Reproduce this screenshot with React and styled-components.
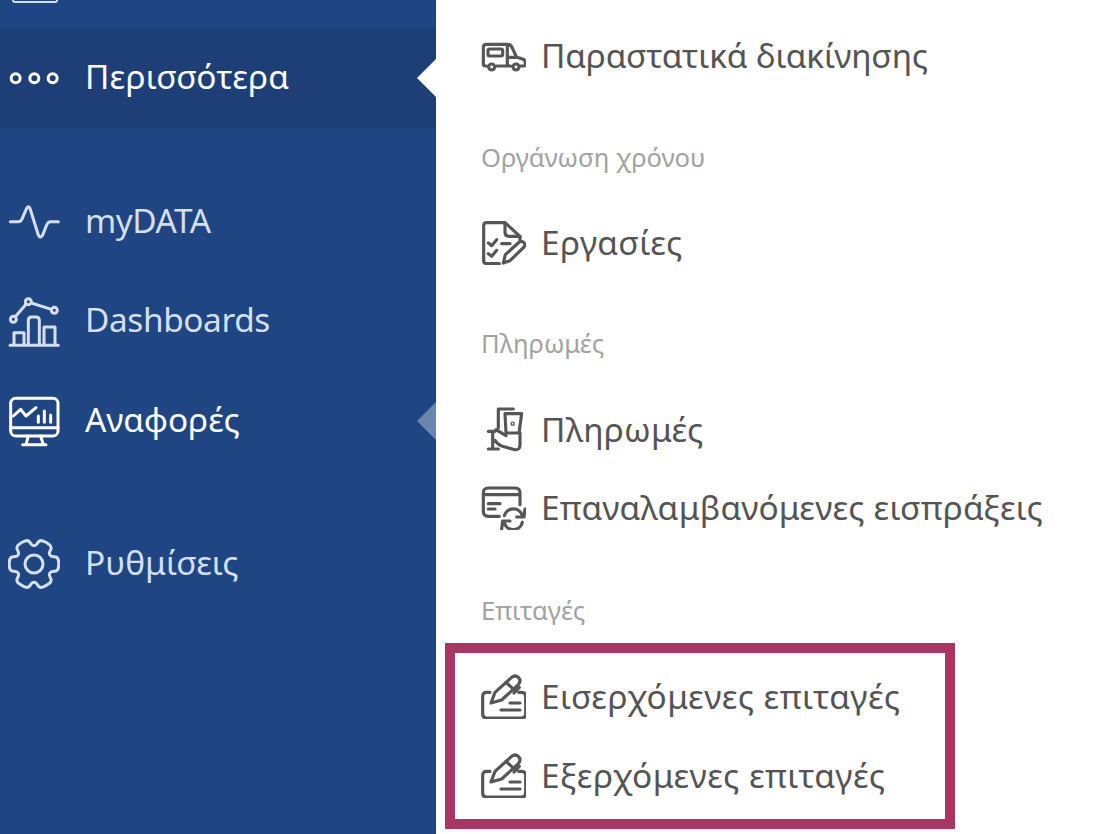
import React from "react";
import styled, { createGlobalStyle } from "styled-components";

const GlobalStyle = createGlobalStyle`
  html, body {
    margin: 0;
    padding: 0;
    height: 834px;
    overflow: hidden;
    background: #fff;
    font-family: "Noto Sans", "Open Sans", sans-serif;
  }
`;

const MENU_ICON_COLOR = "#d5dfec";

// six teeth with flat tops and round notches between them
const gearPath = (cx, cy) => {
  const at = (deg, r) => {
    const rad = (deg * Math.PI) / 180;
    return `${(cx + r * Math.cos(rad)).toFixed(1)} ${(cy + r * Math.sin(rad)).toFixed(1)}`;
  };
  let d = `M${at(-30, 55)}`;
  [0, 60, 120, 180, 240, 300].forEach((a) => {
    d += `Q${at(a - 25, 55)} ${at(a - 22, 60)}`;
    d += `L${at(a - 18, 69)}`;
    d += `Q${at(a - 14, 75)} ${at(a - 8, 74)}`;
    d += `Q${at(a, 75)} ${at(a + 8, 74)}`;
    d += `Q${at(a + 14, 75)} ${at(a + 18, 69)}`;
    d += `L${at(a + 22, 60)}`;
    d += `Q${at(a + 25, 55)} ${at(a + 30, 55)}`;
  });
  return d + "Z";
};

const DotsIcon = () => (
  <MenuSvg viewBox="24 153 156 156" $color="#fff">
    <circle cx="47" cy="232" r="13.5" />
    <circle cx="103" cy="232" r="13.5" />
    <circle cx="158" cy="232" r="13.5" />
  </MenuSvg>
);

const PulseIcon = () => (
  <MenuSvg viewBox="24 588 156 156" $color={MENU_ICON_COLOR}>
    <path d="M31 665H55Q64 665 69 650L80 625Q85 615 90 625L115 705Q121 717 128 705L140 675Q144 665 152 665H175" />
  </MenuSvg>
);

const DashboardIcon = () => (
  <MenuSvg viewBox="24 42 156 156" $color={MENU_ICON_COLOR}>
    <circle cx="40" cy="115" r="9" />
    <circle cx="85" cy="62" r="9" />
    <circle cx="163" cy="88" r="9" />
    <path d="M46 107L78 70M94 66L154 85M30 193H175" />
    <path d="M42 190V155H72V190M85 190V118Q85 108 95 108H108Q118 108 118 118V190M132 190V138H165V190" />
  </MenuSvg>
);

const ReportIcon = () => (
  <MenuSvg viewBox="24 342 156 156" $color="#fff">
    <rect x="32" y="352" width="142" height="113" rx="15" />
    <path d="M32 440H174M85 465L78 491M122 465L130 491M68 491H138" />
    <path d="M40 405L62 385L78 405L108 380M115 424V405M133 424V390M152 424V402" />
  </MenuSvg>
);

const GearIcon = () => (
  <MenuSvg viewBox="25 774 156 156" $color={MENU_ICON_COLOR}>
    <path d={gearPath(103, 852)} />
    <circle cx="103" cy="852" r="27" />
  </MenuSvg>
);

const TruckIcon = () => (
  <PanelSvg viewBox="30 9 138 138">
    <path d="M50 111H46Q40 111 40 105V55Q40 46 50 46H112Q122 46 126 55L140 85L158 90Q166 93 166 102V106Q166 111 160 111H150M80 111H122M112 46V111M112 85H140" />
    <rect x="54" y="60" width="44" height="21" rx="5" />
    <circle cx="65" cy="114" r="9" />
    <circle cx="138" cy="114" r="9" />
  </PanelSvg>
);

const TaskIcon = () => (
  <PanelSvg viewBox="30 18 138 138">
    <path d="M88 152H50Q41 152 41 143V38Q41 29 50 29H105L150 70V82" />
    <path d="M105 29V58Q105 70 117 70H150" />
    <path d="M55 90L65 98L80 80M55 122L65 130L80 112M95 92H120" />
    <path d="M100 150L106 125L148 87Q155 82 162 89Q168 96 161 103L120 143Z" />
  </PanelSvg>
);

const PaymentIcon = () => (
  <PanelSvg viewBox="30 9 138 138">
    <path d="M130 18H85V75M108 90L105 32H155L147 90Z" />
    <path d="M55 85H75M68 85V138M55 138H85M78 80L108 98M75 112Q85 128 105 132L135 140Q150 142 150 125V90" />
    <circle cx="128" cy="62" r="2" />
  </PanelSvg>
);

const RecurringIcon = () => (
  <PanelSvg viewBox="30 243 138 138">
    <path d="M150 305V270Q150 255 135 255H55Q40 255 40 270V325Q40 340 55 340H88M40 275H150M55 302H90M55 318H75" />
    <path d="M103 338A28 28 0 0 1 157 338M165 318L162 342L140 342" />
    <path d="M157 358A28 28 0 0 1 103 360M95 378L98 354L120 354" />
  </PanelSvg>
);

const ChequeIcon = () => (
  <PanelSvg viewBox="120 102 138 138">
    <path d="M150 160H140Q128 160 128 172V225Q128 237 140 237H245Q257 237 257 225V172Q257 160 245 160H236" />
    <path d="M210 192H240M183 213H240" />
    <path d="M153 192L165 160L215 115Q225 107 235 115Q245 125 235 137L185 183Z" />
    <path d="M198 130L222 152M222 162L238 145" />
  </PanelSvg>
);

const menuItems = [
  { label: "myDATA", icon: <PulseIcon />, height: 99, spacing: -0.5 },
  { label: "Dashboards", icon: <DashboardIcon />, height: 99, spacing: -0.4 },
  { label: "Αναφορές", icon: <ReportIcon />, height: 101, bright: true, arrow: true },
];

const App = () => {
  return (
    <Page>
      <GlobalStyle />
      <Sidebar>
        <CutOffRow>
          <CutOffIcon />
        </CutOffRow>
        <MenuRow $height={100} $active $bright>
          <DotsIcon />
          <MenuLabel $spacing={0.18}>Περισσότερα</MenuLabel>
          <Pointer />
        </MenuRow>
        <MenuGroup>
          {menuItems.map((item) => (
            <MenuRow key={item.label} $height={item.height} $bright={item.bright}>
              {item.icon}
              <MenuLabel $spacing={item.spacing}>{item.label}</MenuLabel>
              {item.arrow && <Pointer $faded />}
            </MenuRow>
          ))}
        </MenuGroup>
        <MenuRow $height={100}>
          <GearIcon />
          <MenuLabel>Ρυθμίσεις</MenuLabel>
        </MenuRow>
      </Sidebar>
      <Panel>
        <PanelRow>
          <TruckIcon />
          <RowLabel $spacing={-0.18}>Παραστατικά διακίνησης</RowLabel>
        </PanelRow>
        <SectionTitle $pad={18}>Οργάνωση χρόνου</SectionTitle>
        <PanelRow>
          <TaskIcon />
          <RowLabel $spacing={0.5}>Εργασίες</RowLabel>
        </PanelRow>
        <SectionTitle $pad={16}>Πληρωμές</SectionTitle>
        <PanelRow>
          <PaymentIcon />
          <RowLabel $spacing={0.25}>Πληρωμές</RowLabel>
        </PanelRow>
        <PanelRow>
          <RecurringIcon />
          <RowLabel $spacing={0.21}>Επαναλαμβανόμενες εισπράξεις</RowLabel>
        </PanelRow>
        <SectionTitle $pad={20}>Επιταγές</SectionTitle>
        <HighlightBox>
          <PanelRow>
            <ChequeIcon />
            <RowLabel $spacing={0.48}>Εισερχόμενες επιταγές</RowLabel>
          </PanelRow>
          <PanelRow>
            <ChequeIcon />
            <RowLabel $spacing={0.45}>Εξερχόμενες επιταγές</RowLabel>
          </PanelRow>
        </HighlightBox>
      </Panel>
    </Page>
  );
};

const Page = styled.div`
  display: flex;
  width: 1107px;
  height: 834px;
  overflow: hidden;
`;

const Sidebar = styled.nav`
  width: 436px;
  flex-shrink: 0;
  display: flex;
  flex-direction: column;
  background: #1f4682;
`;

const CutOffRow = styled.div`
  height: 28px;
  padding-left: 12px;
`;

const CutOffIcon = styled.div`
  width: 46px;
  height: 3px;
  box-sizing: border-box;
  border: 2px solid ${MENU_ICON_COLOR};
  border-top: none;
  border-radius: 0 0 4px 4px;
`;

const MenuGroup = styled.div`
  margin: 44px 0 43px;
`;

const MenuRow = styled.div`
  position: relative;
  height: ${(p) => p.$height}px;
  display: flex;
  align-items: center;
  gap: 25px;
  padding-left: 8px;
  font-size: 33.4px;
  color: ${(p) => (p.$bright ? "#fff" : MENU_ICON_COLOR)};
  background: ${(p) => (p.$active ? "#1d3e77" : "transparent")};
`;

const MenuLabel = styled.span`
  padding-bottom: 4px;
  letter-spacing: ${(p) => p.$spacing || 0}px;
`;

const MenuSvg = styled.svg`
  width: 52px;
  height: 52px;
  flex-shrink: 0;
  fill: none;
  stroke: ${(p) => p.$color};
  stroke-width: 9;
  stroke-linecap: round;
  stroke-linejoin: round;
`;

const Pointer = styled.i`
  position: absolute;
  right: 0;
  top: 50%;
  margin-top: -19px;
  border-style: solid;
  border-width: 19px 19px 19px 0;
  border-color: transparent ${(p) => (p.$faded ? "#6a86b0" : "#fff")} transparent transparent;
`;

const Panel = styled.main`
  flex: 1;
  display: flex;
  flex-direction: column;
  padding: 16px 0 0 9px;
`;

const PanelRow = styled.div`
  height: 78px;
  display: flex;
  align-items: center;
  gap: 15px;
  padding-left: 35px;
  font-size: 33.4px;
  color: #545454;
  white-space: nowrap;
`;

const RowLabel = styled.span`
  letter-spacing: ${(p) => p.$spacing || 0}px;
`;

const PanelSvg = styled.svg`
  width: 46px;
  height: 46px;
  flex-shrink: 0;
  fill: none;
  stroke: #565656;
  stroke-width: 9.5;
  stroke-linecap: round;
  stroke-linejoin: round;
`;

const SectionTitle = styled.div`
  height: 109px;
  box-sizing: border-box;
  display: flex;
  align-items: center;
  padding: ${(p) => p.$pad}px 0 0 36px;
  font-size: 25.6px;
  color: #a2a2a2;
`;

const HighlightBox = styled.div`
  width: 510px;
  height: 186px;
  box-sizing: border-box;
  border: 10px solid #ab3562;
  padding-top: 3px;
  margin-top: -12px;
  & > div {
    padding-left: 25px;
    height: 79px;
  }
`;

export default App;
